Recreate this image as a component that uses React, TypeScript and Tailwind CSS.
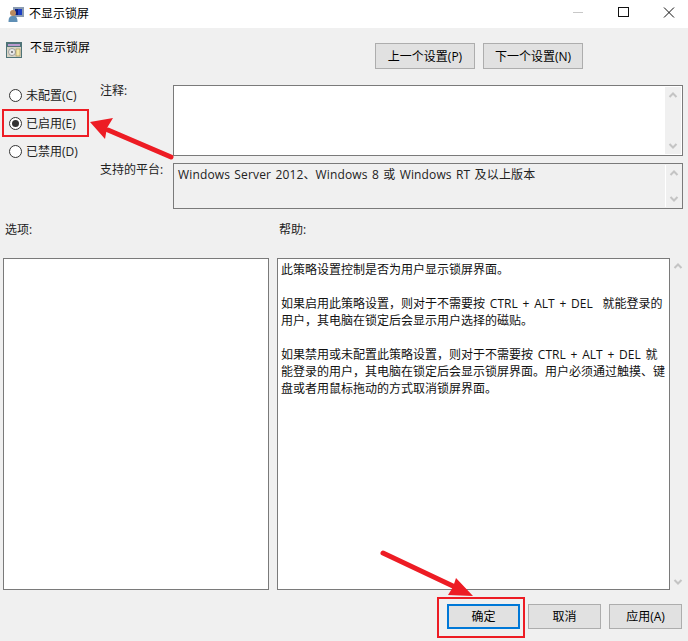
const font = "[font-family:'Open_Sans','Noto_Sans_CJK_SC',sans-serif]";

const ScrollBar = ({ dark }: { dark?: boolean }) => {
  return (
    <div className={`w-4 h-full flex flex-col justify-between items-center py-1 ${dark ? "border-l border-white" : "bg-[#f0f0f0]"}`}>
      <svg width="10" height="8" viewBox="0 0 10 8" fill="none" stroke="#c4c4c4" strokeWidth="2">
        <path d="M1.5 6 L5 2.5 L8.5 6" />
      </svg>
      <svg width="10" height="8" viewBox="0 0 10 8" fill="none" stroke="#c4c4c4" strokeWidth="2">
        <path d="M1.5 2 L5 5.5 L8.5 2" />
      </svg>
    </div>
  );
};

const Radio = ({ label, checked }: { label: string; checked?: boolean }) => {
  return (
    <div className="flex items-center h-[17px] gap-[4px]">
      <span className="w-[13px] h-[13px] rounded-full border border-[#333] bg-white flex items-center justify-center">
        {checked && <span className="w-[7px] h-[7px] rounded-full bg-[#333]" />}
      </span>
      <span className="text-[12px] text-[#222]">{label}</span>
    </div>
  );
};

const Btn = ({ label, focus, w }: { label: string; focus?: boolean; w: string }) => {
  return (
    <div
      className={`${w} flex items-center justify-center bg-[#e1e1e1] text-[12px] text-black pt-[1px] ${
        focus ? "h-[25px] border-2 border-[#0078d7]" : "h-[25px] border border-[#adadad]"
      }`}
    >
      {label}
    </div>
  );
};

export default function App() {
  return (
    <div className={`relative w-[688px] h-[641px] overflow-hidden bg-[#f0f0f0] flex flex-col ${font}`}>
      {/* title bar */}
      <div className="h-[28px] bg-white flex items-center pl-[8px]">
        <svg width="16" height="16" viewBox="0 0 16 16" className="mr-[5px]">
          <rect x="5" y="1" width="11" height="10" fill="#8a9bb0" />
          <rect x="7" y="3" width="7" height="6" fill="#1d3fc4" />
          <rect x="7" y="3" width="3" height="6" fill="#0a1f80" />
          <circle cx="5" cy="7" r="3" fill="#b98a5e" />
          <path d="M0.5 16 C0.5 11 2 10 5 10 C8 10 9.5 11 9.5 16 Z" fill="#5f8fb5" />
        </svg>
        <span className="text-[12px] text-black">不显示锁屏</span>
        <div className="ml-auto flex items-center">
          <svg width="46" height="28" viewBox="0 0 46 28" stroke="#c8c8c8" fill="none">
            <path d="M19 12.5 H29" />
          </svg>
          <svg width="46" height="28" viewBox="0 0 46 28" stroke="#111" fill="none">
            <rect x="18.5" y="7.5" width="10" height="9" strokeWidth="1" />
          </svg>
          <svg width="46" height="28" viewBox="0 0 46 28" stroke="#111" fill="none" className="mr-[-4px]">
            <path d="M18 7.5 L28 17.5 M28 7.5 L18 17.5" />
          </svg>
        </div>
      </div>

      {/* heading row */}
      <div className="flex h-[26px] mt-[15px] pl-[6px] pr-[105px]">
        <svg width="16" height="16" viewBox="0 0 16 16" className="mr-[8px] mt-[-1px]">
          <rect x="0" y="0" width="16" height="16" fill="#4f7478" />
          <rect x="2" y="2" width="12" height="2" fill="#b99bd0" />
          <rect x="1" y="5" width="14" height="10" fill="#d8d4c4" />
          <circle cx="6" cy="10" r="3.5" fill="#e8e8e8" stroke="#777" strokeWidth="0.6" />
          <circle cx="6" cy="10" r="1" fill="#666" />
          <rect x="10" y="7" width="4" height="7" fill="#f2e6a8" stroke="#8a7a40" strokeWidth="0.5" />
        </svg>
        <span className="text-[12px] text-black mt-[-4px]">不显示锁屏</span>
        <div className="ml-auto flex gap-[8px]">
          <Btn label="上一个设置(P)" w="w-[100px] h-[26px]" />
          <Btn label="下一个设置(N)" w="w-[100px] h-[26px]" />
        </div>
      </div>

      {/* settings */}
      <div className="flex mt-[16px] h-[124px]">
        <div className="w-[100px] pl-[9px] pt-[2px] flex flex-col gap-[11px]">
          <Radio label="未配置(C)" />
          <Radio label="已启用(E)" checked />
          <Radio label="已禁用(D)" />
        </div>
        <div className="flex flex-col">
          <div className="flex h-[71px]">
            <span className="w-[73px] text-[12px] text-[#222] h-[17px] mt-[-3px]">注释:</span>
            <div className="w-[510px] h-[71px] bg-white border border-[#7a7a7a] flex justify-end p-px">
              <ScrollBar />
            </div>
          </div>
          <div className="flex h-[46px] mt-[7px]">
            <span className="w-[73px] text-[12px] text-[#222] mt-[-2px]">支持的平台:</span>
            <div className="w-[510px] h-[46px] border border-[#7a7a7a] flex pl-[4px] p-px">
              <span className="flex-1 pt-[1px] text-[12px] text-[#222] leading-[17px] tracking-[0.15px] [word-spacing:1px]">
                Windows Server 2012、Windows 8 或 Windows RT 及以上版本
              </span>
              <ScrollBar dark />
            </div>
          </div>
        </div>
      </div>

      {/* section labels */}
      <div className="flex mt-[12px] h-[17px] text-[12px] text-[#222]">
        <span className="w-[279px] pl-[5px]">选项:</span>
        <span>帮助:</span>
      </div>

      {/* options and help */}
      <div className="flex mt-[20px] h-[332px] pl-[3px] gap-[8px]">
        <div className="w-[266px] bg-white border border-[#7a7a7a]" />
        <div className="w-[393px] bg-white border border-[#7a7a7a] px-[3px] py-[2px] text-[12px] leading-[17px] text-[#111] whitespace-nowrap [word-spacing:1.7px]">
          <p>此策略设置控制是否为用户显示锁屏界面。</p>
          <p className="mt-[17px]">
            如果启用此策略设置，则对于不需要按 CTRL + ALT + DEL&nbsp; 就能登录的
            <br />
            用户，其电脑在锁定后会显示用户选择的磁贴。
          </p>
          <p className="mt-[17px]">
            如果禁用或未配置此策略设置，则对于不需要按 CTRL + ALT + DEL 就
            <br />
            能登录的用户，其电脑在锁定后会显示锁屏界面。用户必须通过触摸、键
            <br />
            盘或者用鼠标拖动的方式取消锁屏界面。
          </p>
        </div>
        <div className="ml-[-8px] w-[16px] h-full">
          <ScrollBar />
        </div>
      </div>

      {/* footer buttons */}
      <div className="flex mt-[14px] pl-[447px] gap-[8px]">
        <Btn label="确定" w="w-[73px]" focus />
        <Btn label="取消" w="w-[73px]" />
        <Btn label="应用(A)" w="w-[73px]" />
      </div>

      {/* red annotations */}
      <div className="absolute left-[2px] top-[109px] w-[87px] h-[28px] border-2 border-[#ed1c24]" />
      <div className="absolute left-[437px] top-[597px] w-[88px] h-[41px] border-2 border-[#ed1c24]" />
      <svg className="absolute left-0 top-0 pointer-events-none" width="688" height="641" viewBox="0 0 688 641">
        <path d="M171 157 L108 130" stroke="#ed1c24" strokeWidth="5" strokeLinecap="round" />
        <path d="M90 122 L113 118 L107 128 L105 139 Z" fill="#ed1c24" />
        <path d="M383 553 L455 587" stroke="#ed1c24" strokeWidth="5" strokeLinecap="round" />
        <path d="M473 596 L448 595 L453 587 L456 578 Z" fill="#ed1c24" />
      </svg>
    </div>
  );
}
